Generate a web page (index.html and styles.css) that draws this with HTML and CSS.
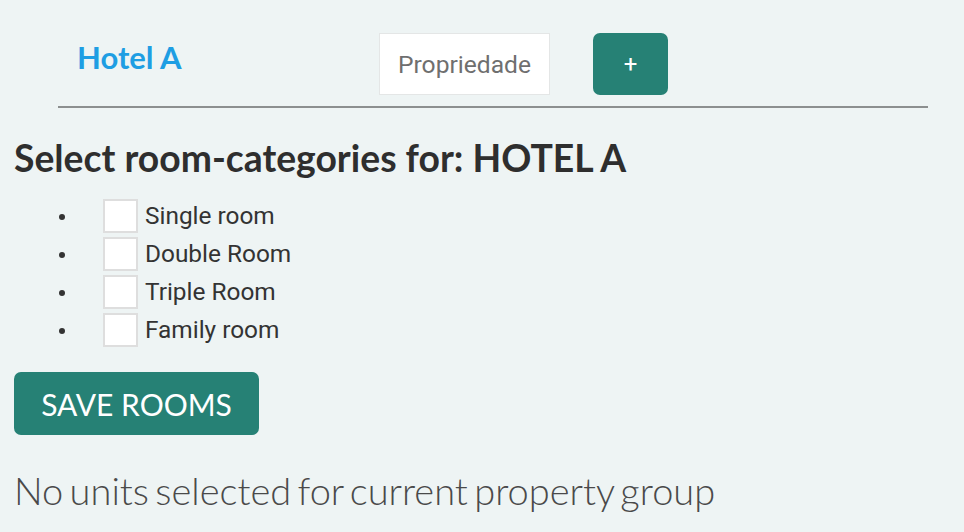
FILE: index.html
```html
<!DOCTYPE html>
<html lang="en">
<head>
<meta charset="utf-8">
<title>Rooms</title>
<link rel="stylesheet" href="styles.css">
</head>
<body>
<nav class="topbar">
  <a class="brand" href="#">Hotel A</a>
  <input class="prop-input" type="text" placeholder="Propriedade">
  <button class="add-btn" type="button">+</button>
</nav>
<main class="content">
  <h2 class="title">Select room-categories for: HOTEL A</h2>
  <ul class="rooms">
    <li><span class="box"></span><span class="label">Single room</span></li>
    <li><span class="box"></span><span class="label">Double Room</span></li>
    <li><span class="box"></span><span class="label">Triple Room</span></li>
    <li><span class="box"></span><span class="label">Family room</span></li>
  </ul>
  <button class="save-btn" type="button">SAVE ROOMS</button>
  <p class="empty">No units selected for current property group</p>
</main>
</body>
</html>
```
FILE: styles.css
```css
* { box-sizing: border-box; }
html, body { margin: 0; padding: 0; }
body {
  background: #eef4f4;
  font-family: Lato, "Open Sans", sans-serif;
  color: #333;
  width: 964px;
  height: 532px;
  overflow: hidden;
}
.topbar {
  display: flex;
  align-items: center;
  margin: 0 36px 0 58px;
  padding: 33px 0 11px 19px;
  border-bottom: 2px solid #8c8f8f;
}
.brand {
  font-family: Lato, sans-serif;
  font-weight: 700;
  font-size: 31px;
  color: #1e9ee3;
  text-decoration: none;
  margin-top: -15px;
  width: 302px;
}
.prop-input {
  width: 171px;
  height: 62px;
  border: 1px solid #e4e6e6;
  background: #fff;
  font-family: Roboto, sans-serif;
  font-size: 24.6px;
  padding: 0 0 0 18px;
  outline: none;
}
.prop-input::placeholder { color: #6f6f6f; }
.add-btn {
  margin-left: 43px;
  width: 75px;
  height: 62px;
  border: none;
  border-radius: 7px;
  background: #268175;
  color: #fff;
  font-family: Roboto, sans-serif;
  font-size: 24px;
  padding: 0;
}
.content { padding: 0 14px; }
.title {
  margin: 28px 0 0;
  font-family: Lato, sans-serif;
  font-weight: 700;
  font-size: 37.3px;
  line-height: 44px;
  color: #2e2e2e;
}
.rooms {
  margin: 19px 0 0;
  padding: 0 0 0 45px;
  list-style: none;
}
.rooms li {
  display: flex;
  align-items: flex-start;
  height: 38px;
  font-family: Roboto, sans-serif;
  font-size: 24.4px;
  color: #333;
}
.rooms li::before {
  content: "";
  width: 6px;
  height: 6px;
  border-radius: 50%;
  background: #333;
  margin: 15px 38px 0 0;
  flex: none;
}
.box {
  flex: none;
  width: 35px;
  height: 34px;
  background: #fff;
  border: 2px solid #dedede;
  margin-right: 7px;
}
.label { line-height: 34px; }
.save-btn {
  display: block;
  margin-top: 21px;
  width: 245px;
  height: 63px;
  border: none;
  border-radius: 7px;
  background: #268175;
  color: #fff;
  font-family: Lato, sans-serif;
  font-size: 30px;
  padding: 0;
}
.empty {
  margin: 32px 0 0;
  font-family: Lato, sans-serif;
  font-weight: 300;
  font-size: 38px;
  word-spacing: -4px;
  color: #4a4a4a;
}
```
